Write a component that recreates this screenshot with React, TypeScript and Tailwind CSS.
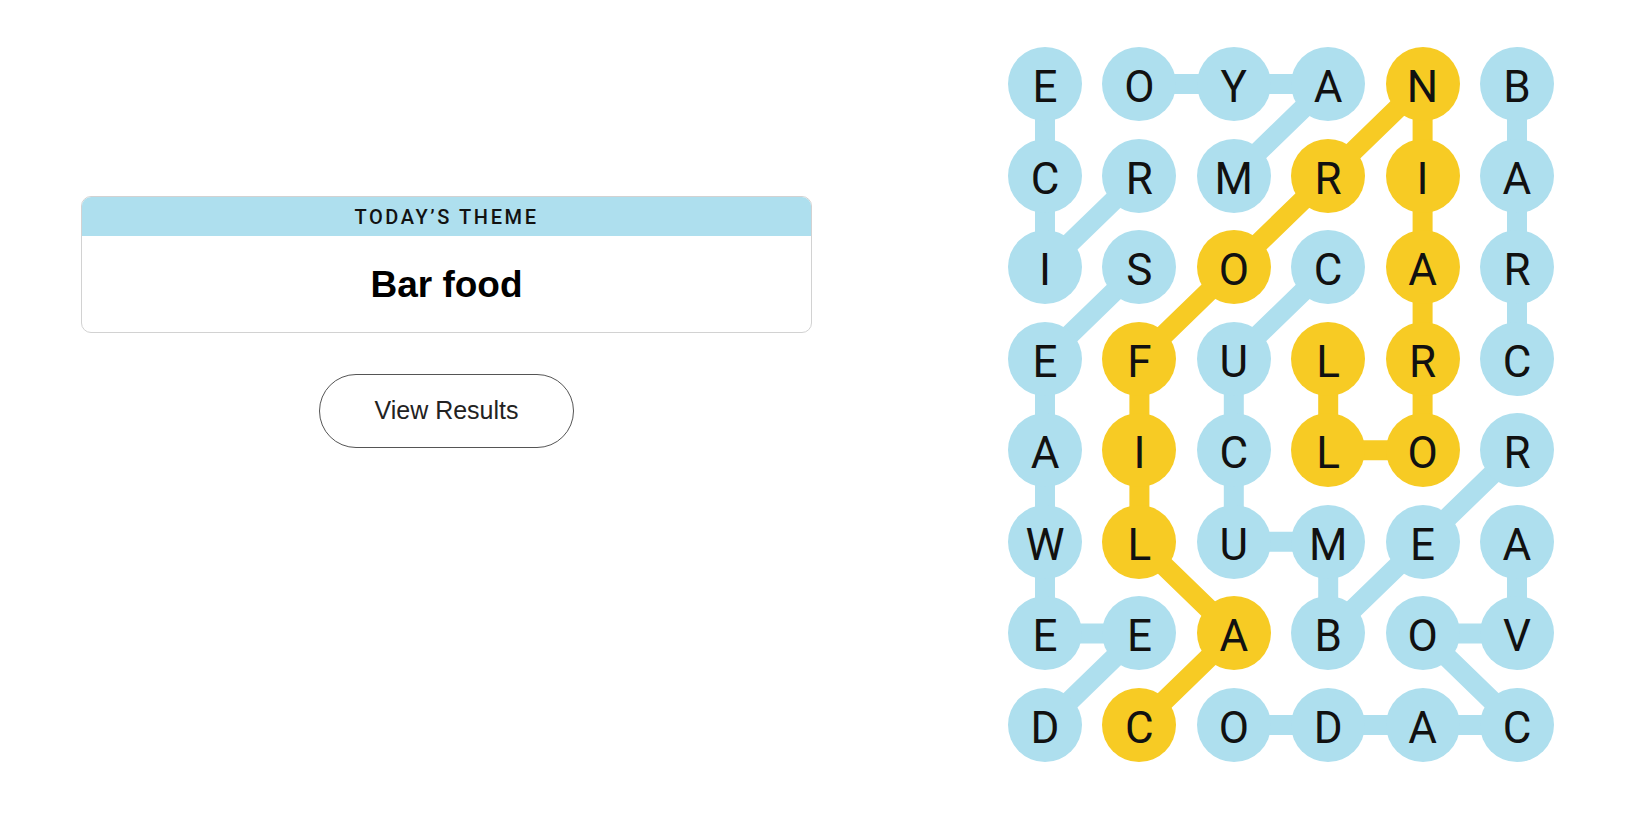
import React from "react";

const GRID = [
  "EOYANB",
  "CRMRIA",
  "ISOCAR",
  "EFULRC",
  "AICLOR",
  "WLUMEA",
  "EEABOV",
  "DCODAC",
];

const YELLOW_CELLS = new Set([
  "0,4", "1,3", "1,4", "2,2", "2,4", "3,1", "3,3", "3,4", "4,1", "4,3", "4,4", "5,1", "6,2", "7,1",
]);

type P = [number, number];
const blueWords: P[][] = [
  [[1, 1], [2, 0], [1, 0], [0, 0]],
  [[2, 1], [3, 0], [4, 0], [5, 0], [6, 0], [6, 1], [7, 0]],
  [[1, 2], [0, 3], [0, 2], [0, 1]],
  [[2, 3], [3, 2], [4, 2], [5, 2], [5, 3], [6, 3], [5, 4], [4, 5]],
  [[3, 5], [2, 5], [1, 5], [0, 5]],
  [[5, 5], [6, 5], [6, 4], [7, 5], [7, 4], [7, 3], [7, 2]],
];
const yellowWord: P[] = [
  [7, 1], [6, 2], [5, 1], [4, 1], [3, 1], [2, 2], [1, 3], [0, 4], [1, 4], [2, 4], [3, 4], [4, 4], [4, 3], [3, 3],
];

const BLUE = "#aedfee";
const YEL = "#f7cb24";
const cx = (c: number) => 37 + c * 94.4;
const cy = (r: number) => 37 + r * 91.57;

function toPoints(w: P[]) {
  return w.map(([r, c]) => `${cx(c)},${cy(r)}`).join(" ");
}

export default function App() {
  return (
    <div className="w-full h-[825px] bg-white flex" style={{ fontFamily: "'Liberation Sans', Arial, sans-serif" }}>
      <div className="ml-[81px] mt-[196px] w-[731px] flex flex-col items-center">
        <div className="w-full rounded-[10px] border border-[#d2d2d2] overflow-hidden">
          <div className="h-[39px] bg-[#aedfee] flex items-center justify-center">
            <span className="text-[20px] font-medium tracking-[2.6px] text-[#121212] font-['Roboto',sans-serif] uppercase">
              Today’s Theme
            </span>
          </div>
          <div className="h-[96px] flex items-center justify-center pt-[1px]">
            <span className="text-[37px] font-bold text-black leading-none">Bar food</span>
          </div>
        </div>
        <button className="mt-[41px] w-[255px] h-[74px] rounded-full border border-[#555] bg-white flex items-center justify-center">
          <span className="text-[25px] text-[#222]">View Results</span>
        </button>
      </div>
      <div className="ml-[196px] mt-[47px] relative w-[546px] h-[715px]">
        <svg className="absolute inset-0" width="546" height="715" viewBox="0 0 546 715">
          {blueWords.map((w, i) => (
            <polyline key={i} points={toPoints(w)} fill="none" stroke={BLUE} strokeWidth={20} strokeLinejoin="round" />
          ))}
          <polyline points={toPoints(yellowWord)} fill="none" stroke={YEL} strokeWidth={20} strokeLinejoin="round" />
        </svg>
        <div className="relative grid grid-cols-[repeat(6,74px)] grid-rows-[repeat(8,74px)] gap-x-[20.4px] gap-y-[17.57px]">
          {GRID.map((row, r) =>
            row.split("").map((ch, c) => {
              const y = YELLOW_CELLS.has(`${r},${c}`);
              return (
                <div
                  key={`${r}-${c}`}
                  className={
                    "w-[74px] h-[74px] rounded-full flex items-center justify-center pt-[6px] " +
                    (y ? "bg-[#f7cb24]" : "bg-[#aedfee]")
                  }
                >
                  <span className="text-[44px] leading-none text-[#111] font-['Roboto',sans-serif] font-normal">{ch}</span>
                </div>
              );
            })
          )}
        </div>
      </div>
    </div>
  );
}
